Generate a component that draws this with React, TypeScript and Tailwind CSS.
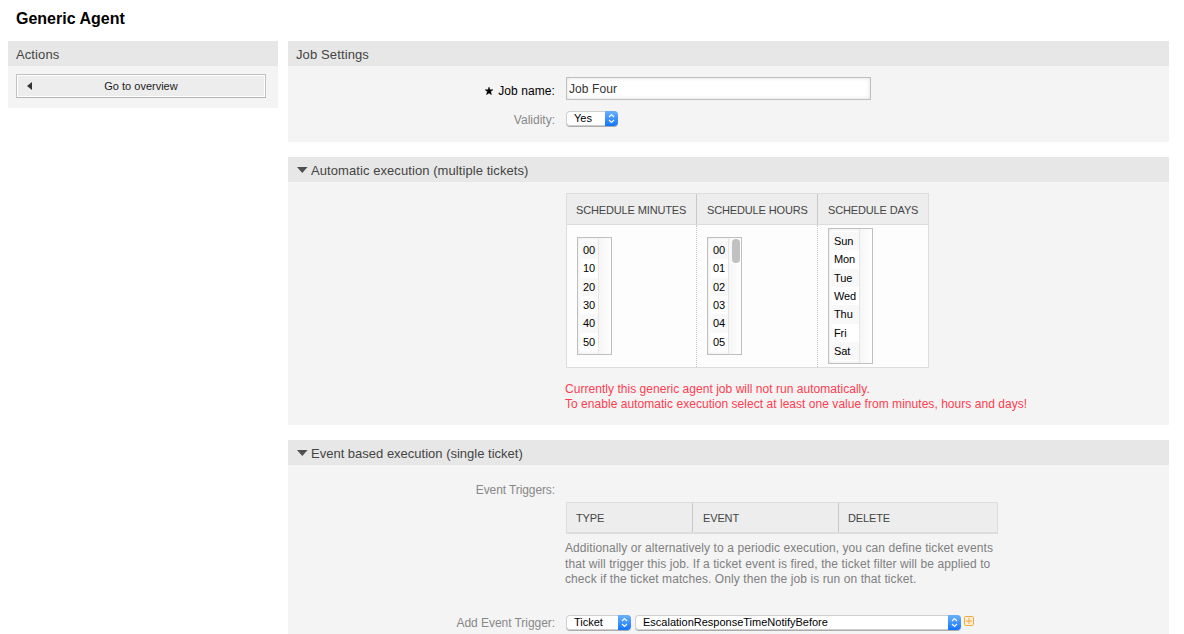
import React from "react";

function SectionHeader({ title, spacing, collapsible }: { title: string; spacing: string; collapsible?: boolean }) {
  return (
    <div className="flex h-[25px] items-center bg-[#e7e7e7] px-2 pt-[2px] text-[13px] leading-[23px] text-[#444]">
      {collapsible && (
        <svg width="11" height="6" viewBox="0 0 11 6" className="mr-[3px] ml-[1px] mb-[2px] block shrink-0">
          <path d="M0 0H10.6L5.3 6Z" fill="#505050" />
        </svg>
      )}
      <h2 className={spacing}>{title}</h2>
    </div>
  );
}

function Select({ value, width }: { value: string; width: string }) {
  return (
    <div
      className={`flex h-[15px] shrink-0 overflow-hidden rounded-[4px] bg-white text-[11px] leading-[15px] text-black shadow-[inset_0_0_0_1px_#cfcfcf,0_1px_0_#ababab] ${width}`}
    >
      <span className="flex-1 pl-2">{value}</span>
      <span className="flex w-[13px] items-center justify-center bg-gradient-to-b from-[#67b0fb] to-[#0a74fc]">
        <svg width="7" height="11" viewBox="0 0 7 11" fill="none" stroke="#fff" strokeWidth="1.2">
          <path d="M1 4L3.5 1.6L6 4M1 7L3.5 9.4L6 7" />
        </svg>
      </span>
    </div>
  );
}

function ListBox({ items, size, inner, thumb }: { items: string[]; size: string; inner: string; thumb?: boolean }) {
  return (
    <div className={`flex border border-[#bfbfbf] bg-white shadow-[inset_0_0_4px_#e4e4e4] ${size}`}>
      <ul className={`pt-[3px] pl-[3px] text-[11px] tracking-[-0.1px] text-black ${inner}`}>
        {items.map((item, i) => (
          <li
            key={item}
            className={`h-[18.35px] pl-[2px] leading-[19px] ${i % 2 === 0 ? "bg-[#f8f8f8]" : "bg-white"}`}
          >
            {item}
          </li>
        ))}
      </ul>
      <div className="flex-1 border-l border-[#e6e6e6] bg-gradient-to-r from-[#f6f6f6] to-[#fefefe] pt-[1px] pl-[3px]">
        {thumb && <div className="h-6 w-2 rounded-full bg-[#c1c1c1]" />}
      </div>
    </div>
  );
}

const label = "w-[267px] shrink-0 text-right text-[12px] leading-[15px]";

export default function App() {
  return (
    <div className="h-[634px] overflow-hidden bg-white font-['Liberation_Sans',Arial,sans-serif]">
      <h1 className="h-[41px] pt-[8px] pl-4 text-[16px] leading-[22px] font-bold text-black">Generic Agent</h1>
      <div className="flex gap-[10px] pl-2">
        <aside className="w-[270px] shrink-0">
          <SectionHeader title="Actions" spacing="tracking-[0.1px]" />
          <div className="h-[42px] bg-[#f4f4f4] px-2 pt-2">
            <button className="flex h-6 w-[250px] items-center border border-[#c2c2c2] border-b-[#b5b5b5] bg-[#ededed] text-[11px] text-[#222] shadow-[inset_0_0_0_1px_#fff]">
              <svg width="5" height="8" viewBox="0 0 5 8" className="ml-[10px]">
                <path d="M5 0V8L0 4Z" fill="#333" />
              </svg>
              <span className="flex-1 pr-[15px] text-center">Go to overview</span>
            </button>
          </div>
        </aside>

        <main className="flex w-[881px] shrink-0 flex-col gap-[15px]">
          <section>
            <SectionHeader title="Job Settings" spacing="tracking-[0.12px]" />
            <div className="h-[76px] bg-[#f4f4f4] pt-[11px]">
              <div className="flex h-[34px] gap-[11px]">
                <label className={`flex items-start justify-end pt-[7px] tracking-[0.08px] text-black ${label}`}>
                  <svg width="8" height="8" viewBox="0 0 8 8" className="mt-[3px] mr-[5px]">
                    <path d="M4 0L5 2.7H8L5.7 4.6L6.5 7.8L4 6L1.5 7.8L2.3 4.6L0 2.7H3Z" fill="#000" stroke="#000" strokeWidth="0.4" />
                  </svg>
                  Job name:
                </label>
                <div className="h-[23px] w-[305px] border border-[#bfbfbf] bg-white pl-[2px] text-[12px] leading-[22px] tracking-[0.1px] text-[#333] shadow-[inset_0_0_4px_#dedede]">
                  Job Four
                </div>
              </div>
              <div className="flex gap-[11px]">
                <span className={`pt-[2px] text-[#888] ${label}`}>Validity:</span>
                <Select value="Yes" width="w-[52px]" />
              </div>
            </div>
          </section>

          <section>
            <SectionHeader
              title="Automatic execution (multiple tickets)"
              spacing="tracking-[0.075px]"
              collapsible
            />
            <div className="h-[243px] bg-[#f4f4f4] pt-[11px] pl-[277px]">
              <div className="ml-[1px] w-[363px] border border-[#ddd] bg-[#fdfdfd]">
                <div className="flex h-[31px] border-b border-[#ddd] bg-[#ededed] text-[11px] leading-[32px] tracking-[-0.14px] text-[#444]">
                  <div className="w-[130px] border-r border-[#c8c8c8] pl-[9px]">SCHEDULE MINUTES</div>
                  <div className="w-[121px] border-r border-[#c8c8c8] pl-[10px]">SCHEDULE HOURS</div>
                  <div className="flex-1 pl-[10px]">SCHEDULE DAYS</div>
                </div>
                <div className="flex h-[142px]">
                  <div className="flex w-[130px] items-center border-r border-dotted border-[#c8c8c8] pl-[10px]">
                    <ListBox items={["00", "10", "20", "30", "40", "50"]} size="h-[118px] w-[35px]" inner="w-[20px]" />
                  </div>
                  <div className="flex w-[121px] items-center border-r border-dotted border-[#c8c8c8] pl-[10px]">
                    <ListBox items={["00", "01", "02", "03", "04", "05"]} size="h-[118px] w-[35px]" inner="w-[20px]" thumb />
                  </div>
                  <div className="flex items-center pl-[10px]">
                    <ListBox
                      items={["Sun", "Mon", "Tue", "Wed", "Thu", "Fri", "Sat"]}
                      size="h-[136px] w-[45px]"
                      inner="w-[30px]"
                    />
                  </div>
                </div>
              </div>
              <p className="mt-[14px] text-[12px] leading-[15px] tracking-[0.037px] whitespace-nowrap text-[#ff3c50]">
                Currently this generic agent job will not run automatically.
                <br />
                To enable automatic execution select at least one value from minutes, hours and days!
              </p>
            </div>
          </section>

          <section>
            <SectionHeader title="Event based execution (single ticket)" spacing="-mt-px" collapsible />
            <div className="h-[180px] bg-[#f4f4f4] pt-[18px]">
              <div className={`tracking-[-0.1px] text-[#888] ${label}`}>Event Triggers:</div>
              <div className="mt-[4px] ml-[278px] flex h-8 w-[432px] border border-b-2 border-[#ddd] bg-[#ededed] text-[11px] leading-[31px] tracking-[-0.14px] text-[#444]">
                <div className="w-[126px] border-r border-[#c8c8c8] pl-[9px]">TYPE</div>
                <div className="w-[146px] border-r border-[#c8c8c8] pl-[10px]">EVENT</div>
                <div className="pl-[9px]">DELETE</div>
              </div>
              <p className="mt-[7px] ml-[277px] h-[46px] text-[12px] leading-[15.5px] tracking-[0.085px] whitespace-nowrap text-[#808080]">
                Additionally or alternatively to a periodic execution, you can define ticket events
                <br />
                that will trigger this job. If a ticket event is fired, the ticket filter will be applied to
                <br />
                check if the ticket matches. Only then the job is run on that ticket.
              </p>
              <div className="mt-[28px] flex">
                <span className={`mr-[11px] pt-[1px] tracking-[-0.05px] text-[#888] ${label}`}>Add Event Trigger:</span>
                <Select value="Ticket" width="w-[65px] mr-1" />
                <Select value="EscalationResponseTimeNotifyBefore" width="w-[326px]" />
                <svg width="10" height="10" viewBox="0 0 10 10" className="mt-[1px] ml-[3px]" fill="none" stroke="#f6a73c">
                  <rect x="0.5" y="0.5" width="9" height="9" rx="1.2" fill="#fdeed8" />
                  <path d="M5 2V8M2 5H8" />
                </svg>
              </div>
            </div>
          </section>
        </main>
      </div>
    </div>
  );
}
